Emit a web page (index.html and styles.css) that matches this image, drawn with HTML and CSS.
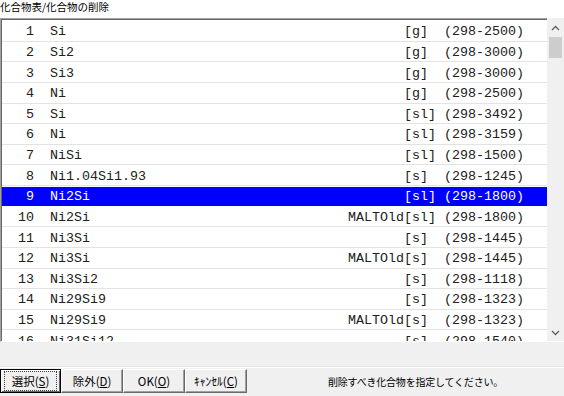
FILE: index.html
```html
<!DOCTYPE html>
<html lang="ja">
<head>
    <meta charset="UTF-8">
    <title>化合物表/化合物の削除</title>
    <link rel="stylesheet" href="styles.css">
</head>
<body>
    <div class="window">
        <div class="caption">化合物表/化合物の削除</div>

        <!-- Liste des composés -->
        <div class="listbox">
            <ul class="rows">
                <li class="row"><span class="num">1</span><span class="name">Si</span><span class="info">[g]  (298-2500)</span></li>
                <li class="row"><span class="num">2</span><span class="name">Si2</span><span class="info">[g]  (298-3000)</span></li>
                <li class="row"><span class="num">3</span><span class="name">Si3</span><span class="info">[g]  (298-3000)</span></li>
                <li class="row"><span class="num">4</span><span class="name">Ni</span><span class="info">[g]  (298-2500)</span></li>
                <li class="row"><span class="num">5</span><span class="name">Si</span><span class="info">[sl] (298-3492)</span></li>
                <li class="row"><span class="num">6</span><span class="name">Ni</span><span class="info">[sl] (298-3159)</span></li>
                <li class="row"><span class="num">7</span><span class="name">NiSi</span><span class="info">[sl] (298-1500)</span></li>
                <li class="row"><span class="num">8</span><span class="name">Ni1.04Si1.93</span><span class="info">[s]  (298-1245)</span></li>
                <li class="row selected"><span class="num">9</span><span class="name">Ni2Si</span><span class="info">[sl] (298-1800)</span></li>
                <li class="row"><span class="num">10</span><span class="name">Ni2Si</span><span class="info">MALTOld[sl] (298-1800)</span></li>
                <li class="row"><span class="num">11</span><span class="name">Ni3Si</span><span class="info">[s]  (298-1445)</span></li>
                <li class="row"><span class="num">12</span><span class="name">Ni3Si</span><span class="info">MALTOld[s]  (298-1445)</span></li>
                <li class="row"><span class="num">13</span><span class="name">Ni3Si2</span><span class="info">[s]  (298-1118)</span></li>
                <li class="row"><span class="num">14</span><span class="name">Ni29Si9</span><span class="info">[s]  (298-1323)</span></li>
                <li class="row"><span class="num">15</span><span class="name">Ni29Si9</span><span class="info">MALTOld[s]  (298-1323)</span></li>
                <li class="row"><span class="num">16</span><span class="name">Ni31Si12</span><span class="info">[s]  (298-1540)</span></li>
            </ul>

            <div class="scrollbar">
                <svg class="arrow" width="17" height="17" viewBox="0 0 17 17">
                    <path d="M5 10 L8.5 6.5 L12 10" fill="none" stroke="#606060" stroke-width="1.3"/>
                </svg>
                <div class="thumb"></div>
                <div class="track"></div>
                <svg class="arrow" width="17" height="17" viewBox="0 0 17 17">
                    <path d="M5 7 L8.5 10.5 L12 7" fill="none" stroke="#606060" stroke-width="1.3"/>
                </svg>
            </div>
        </div>

        <div class="footer">
            <div class="buttons">
                <button class="btn default"><span class="focus">選択(<u>S</u>)</span></button>
                <button class="btn">除外(<u>D</u>)</button>
                <button class="btn">OK(<u>O</u>)</button>
                <button class="btn">ｷｬﾝｾﾙ(<u>C</u>)</button>
                <div class="status">削除すべき化合物を指定してください。</div>
            </div>
        </div>
    </div>
</body>
</html>
```

FILE: styles.css
```css
/* Style global */
body {
    margin: 0;
    padding: 0;
    font-family: "Noto Sans CJK JP", "Noto Sans", sans-serif;
    background-color: #f0f0f0;
}

.window {
    width: 564px;
    height: 396px;
    display: flex;
    flex-direction: column;
    overflow: hidden;
}

.caption {
    height: 18px;
    background-color: #ffffff;
    font-size: 10.5px;
    line-height: 14px;
    color: #000;
    box-sizing: border-box;
}

/* Liste */
.listbox {
    height: 324px;
    display: flex;
    background-color: #ffffff;
    border-top: 1px solid #a0a0a0;
    border-left: 1px solid #a0a0a0;
    box-shadow: inset 1px 1px 0 #696969;
    border-bottom: 1px solid #ffffff;
    box-sizing: border-box;
}

.rows {
    list-style: none;
    margin: 0;
    padding: 2px 0 0 1px;
    flex: 1;
    overflow: hidden;
    font-family: "Liberation Mono", "Courier New", monospace;
    font-size: 13.33px;
    color: #202020;
}

.row {
    display: flex;
    align-items: center;
    height: 20.64px;
    padding-top: 2px;
    box-sizing: border-box;
    border-bottom: 1px solid #e3e3e3;
    white-space: pre;
}

.row .num {
    width: 32px;
    text-align: right;
}

.row .name {
    margin-left: 16px;
    flex: 1;
}

.row .info {
    padding-right: 23px;
}

.row.selected {
    background-color: #0000ff;
    color: #ffffff;
    border-bottom-color: #ffffff;
    box-shadow: inset 0 1px 0 #ffffff;
}

.scrollbar {
    width: 17px;
    display: flex;
    flex-direction: column;
    background-color: #f0f0f0;
    margin-top: -1px;
}

.arrow {
    display: block;
    flex: none;
    margin-top: 2px;
}

.thumb {
    height: 21px;
    margin: 0 2px;
    background-color: #cdcdcd;
}

.track {
    flex: 1;
}

/* Pied de page */
.footer {
    flex: 1;
    display: flex;
    flex-direction: column;
    justify-content: flex-end;
    padding-bottom: 3px;
}

.buttons {
    display: flex;
    align-items: center;
    border-top: 1px solid #ffffff;
    box-shadow: 0 -1px 0 #e3e3e3;
    padding-top: 1px;
}

.btn {
    width: 62px;
    height: 24px;
    padding: 0;
    margin: 0;
    font-family: "Noto Sans CJK JP", "Noto Sans", sans-serif;
    font-size: 11.5px;
    color: #000;
    background-color: #f0f0f0;
    border: 1px solid;
    border-color: #ffffff #696969 #696969 #ffffff;
    box-shadow: inset -1px -1px 0 #a0a0a0;
}

.btn.default {
    width: 61px;
    border: 1px solid #000;
    box-shadow: inset 1px 1px 0 #ffffff, inset -1px -1px 0 #696969;
}

.btn .focus {
    display: inline-block;
    padding: 0 6px;
    outline: 1px dotted #404040;
    outline-offset: 1px;
}

.btn u {
    text-underline-offset: 1px;
}

.status {
    flex: 1;
    text-align: center;
    font-size: 10px;
    letter-spacing: -0.2px;
    color: #000;
    padding-left: 20px;
}
```
